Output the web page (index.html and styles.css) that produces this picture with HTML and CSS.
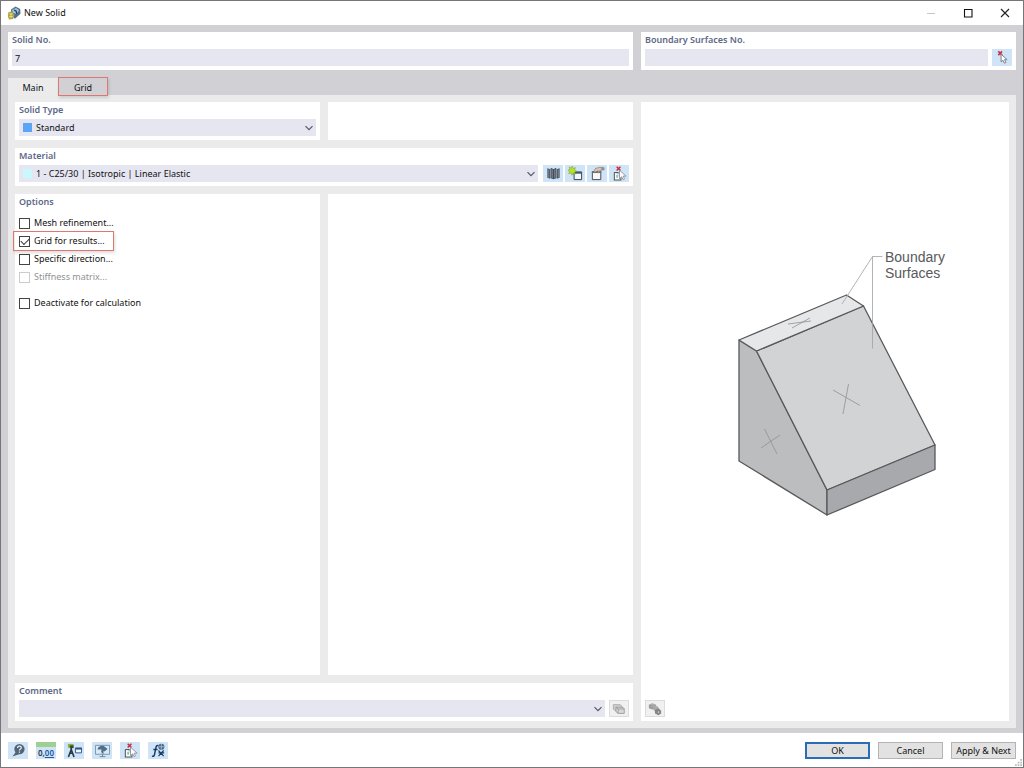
FILE: index.html
```html
<!DOCTYPE html>
<html lang="en">
<head>
<meta charset="utf-8">
<title>New Solid</title>
<link rel="stylesheet" href="styles.css">
</head>
<body>
<svg class="defs" aria-hidden="true">
  <defs>
    <symbol id="chevron" viewBox="0 0 10 10"><path d="M1.5 3.2 5 6.7 8.5 3.2" fill="none" stroke="#555866" stroke-width="1.2"/></symbol>
    <symbol id="select-object" viewBox="0 0 16 16">
      <path d="M2.5 7h4v1M2.5 7v8h7v-3" fill="#f5fbff" stroke="#555" stroke-width="1.1"/>
      <path d="M4.5 9.5h2v3h-2z" fill="#8fc4a8"/>
      <path d="M5 .8 9 4.8M9 .8 5 4.8" stroke="#c92f48" stroke-width="1.7"/>
      <path d="M8 4.5v9l2.2-2 1.6 3 1.5-.8-1.5-2.9H15z" fill="#fff" stroke="#8b8993" stroke-width=".9"/>
    </symbol>
  </defs>
</svg>
<div class="window">
  <header class="titlebar">
    <svg class="app-icon" viewBox="0 0 14 14"><path d="M4 3.500 8.500 .5l4.700 2.500.3 4.800-5.500 5-4-3.500z" fill="#52718f"/><path d="M5 4 9 2l3 2-2 4-4-1z" fill="#a4c3db"/><path d="m7 4 2 1 1 3" fill="none" stroke="#243f62" stroke-width="1.3"/><path d="M1.500 6 5 5.500 7.500 9 6 13 2 13.500 .8 10z" fill="#b5a444"/><path d="M2.500 8h3M2.300 10.500h3.400M4 7v5" stroke="#eee1a0" stroke-width=".8"/></svg>
    <h1 class="title">New Solid</h1>
    <button class="win-btn" aria-label="Minimize" disabled><svg viewBox="0 0 10 10"><path d="M1 5.500h8" stroke="#c6c6c6"/></svg></button>
    <button class="win-btn" aria-label="Maximize"><svg viewBox="0 0 10 10"><path d="M1.500 1.500h7.500v7.500h-7.500z" fill="none" stroke="#111" stroke-width="1.1"/></svg></button>
    <button class="win-btn" aria-label="Close"><svg viewBox="0 0 10 10"><path d="m1 1 8 8M9 1 1 9" stroke="#222" stroke-width="1.1"/></svg></button>
  </header>

  <main class="body">
    <div class="numbers">
      <section class="card">
        <label class="heading" for="solid-no">Solid No.</label>
        <div class="row"><input class="field" id="solid-no" type="text" value="7"></div>
      </section>
      <section class="card">
        <label class="heading" for="surfaces-no">Boundary Surfaces No.</label>
        <div class="row"><input class="field" id="surfaces-no" type="text">
          <button class="tool" aria-label="Select surfaces"><svg viewBox="0 0 16 16"><path d="m3.500 1.500 4 4m0-4-4 4" stroke="#c92f48" stroke-width="1.7"/><path d="M6.500 4.500v8.200l2-1.800 1.500 3.200 1.600-.8-1.400-3h2.700z" fill="#fff" stroke="#7d7b88"/></svg></button>
        </div>
      </section>
    </div>

    <nav class="tabs" role="tablist">
      <button class="tab tab-active" role="tab" aria-selected="true">Main</button>
      <button class="tab marked" role="tab" aria-selected="false">Grid</button>
    </nav>

    <div class="page">
      <div class="settings">
        <section class="card">
          <label class="heading" for="solid-type">Solid Type</label>
          <div class="row">
            <div class="combo">
              <select class="field with-swatch" id="solid-type"><option>Standard</option></select>
              <span class="swatch swatch-type"></span>
              <svg class="arrow"><use href="#chevron"/></svg>
            </div>
          </div>
        </section>
        <section class="card"></section>
        <section class="card wide">
          <label class="heading" for="material">Material</label>
          <div class="row">
            <div class="combo">
              <select class="field with-swatch" id="material"><option>1 - C25/30 | Isotropic | Linear Elastic</option></select>
              <span class="swatch swatch-material"></span>
              <svg class="arrow"><use href="#chevron"/></svg>
            </div>
            <div class="tools">
              <button class="tool" aria-label="Material library"><svg viewBox="0 0 16 16"><path d="M1.500 2.500 4.500 3.500v10l-3-1zM14.500 2.500l-3 1v10l3-1z" fill="#3f4a55"/><path d="M5.300 2.500 8 3.700v10l-2.700-1zM10.700 2.500 8 3.700v10l2.700-1z" fill="#6d7984" stroke="#3f4a55" stroke-width=".8"/><path d="M3 3.500v9M13 3.500v9" stroke="#b9c6d0" stroke-width=".6"/></svg></button>
              <button class="tool" aria-label="New material"><svg viewBox="0 0 16 16"><path d="M6.500 6.500h8v8h-8z" fill="#f2f7fa" stroke="#333b44"/><path d="M6 6h9v2.200H6z" fill="#405970"/><path d="m4.500 0 .9 2.600L8 1.700 7 4.200l2.500 1.300L7 6.300l.7 2.500L5.200 7.500 4.300 10l-.9-2.600-2.600.8 1-2.500L-.5 4.400l2.500-.8L1.300 1l2.400 1.300z" fill="#b9e02c" stroke="#719d19" stroke-width=".5"/></svg></button>
              <button class="tool" aria-label="Edit material"><svg viewBox="0 0 16 16"><path d="M2.500 6h9v8.500h-9z" fill="#f8f8f8" stroke="#40464e"/><path d="M2 5.500h10v2H2z" fill="#646e79"/><path d="m4 6 2-3.500L10 1.500h4v2.700l-3 .3-2 3-1-.4 1-2-4 1.500z" fill="#e1c0b5" stroke="#76645f" stroke-width=".6"/><path d="M12 1.500h3.500v3H12z" fill="#8793a0"/></svg></button>
              <button class="tool" aria-label="Select material"><svg><use href="#select-object"/></svg></button>
            </div>
          </div>
        </section>
        <section class="card options" role="group" aria-labelledby="options-title">
          <h2 class="heading" id="options-title">Options</h2>
          <label class="option"><input type="checkbox">Mesh refinement...</label>
          <label class="option marked"><input type="checkbox" checked>Grid for results...</label>
          <label class="option"><input type="checkbox">Specific direction...</label>
          <label class="option"><input type="checkbox" disabled>Stiffness matrix...</label>
          <label class="option option-apart"><input type="checkbox">Deactivate for calculation</label>
        </section>
        <section class="card"></section>
        <section class="card wide">
          <label class="heading" for="comment">Comment</label>
          <div class="row">
            <div class="combo">
              <select class="field" id="comment"><option></option></select>
              <svg class="arrow"><use href="#chevron"/></svg>
            </div>
            <button class="tool tool-off" aria-label="Comment library" disabled><svg viewBox="0 0 16 16"><path d="M1.500 3h8l2 2v5h-8l-2-2z" fill="#ccc" stroke="#aaa"/><path d="M4.500 6h7l2.500 1.500V13H7l-2.500-2z" fill="#d8d8d8" stroke="#999"/><path d="M4.500 6 7 8h7M7 8v5" fill="none" stroke="#999"/></svg></button>
          </div>
        </section>
      </div>

      <section class="card preview">
        <svg class="drawing" viewBox="0 0 250 290" role="img" aria-label="Solid with boundary surfaces">
          <g stroke="#58595b" stroke-width="1.3" stroke-linejoin="round">
            <path d="M19 105 36.500 116 107 255v25L19 226z" fill="#bcbdbf"/>
            <path d="m36.500 116 107-45L215 210 107 255z" fill="#d2d3d5"/>
            <path d="m19 105 107.500-45L143.500 71l-107 45z" fill="#e6e7e8"/>
            <path d="m107 255 108-45v24.500L107 280z" fill="#a8a9ad"/>
          </g>
          <path d="m68 89 23-3M72 93l18-10M113 155l27 15.500M128.500 149l-5.500 30M41 213l19-13M44.500 194 57 219" fill="none" stroke="#8f9093" stroke-width=".8"/>
          <path d="M162.500 21.500h-10L122 69M152.500 21.500v92" fill="none" stroke="#a0a1a4" stroke-width=".8"/>
          <text class="caption" x="165" y="27">Boundary</text>
          <text class="caption" x="165" y="43">Surfaces</text>
        </svg>
        <button class="tool tool-off" aria-label="Preview settings" disabled><svg viewBox="0 0 16 16"><path d="M1 3 5 1.500 9 3v4L5 8.500 1 7z" fill="#999"/><path d="M1 3h8M3 5h6" stroke="#bbb" stroke-width=".8"/><path d="m5 7 4-3 3 2v4l-4 1z" fill="#aaa"/><path d="m8 9 4-2 3 3v3l-3 2-4-2z" fill="#858585"/><circle cx="12" cy="11.500" r="1" fill="#ccc"/></svg></button>
      </section>
    </div>
  </main>

  <footer class="footer">
    <div class="footer-tools">
      <button class="tool" aria-label="Help"><svg viewBox="0 0 16 16"><circle cx="9" cy="6.500" r="5.500" fill="#526577"/><path d="M5.500 9 1.500 14.500l7-2.500z" fill="#526577"/><path d="M7 5.300C7 2.500 11 2.800 11 5c0 1.500-2 1.500-2 3m0 1v1.300" fill="none" stroke="#e6eff5" stroke-width="1.300"/></svg></button>
      <button class="tool tool-units" aria-label="Units">0,<u>00</u></button>
      <button class="tool" aria-label="Display properties"><svg viewBox="0 0 16 16"><path d="M1 1h6v4H1z" fill="#8fae43"/><path d="M3 2.500h4v3H3z" fill="#384b34"/><path d="M4.500 5v4M1.500 15l3-8 3 8M2.500 11h4" fill="none" stroke="#263943" stroke-width="1.700"/><path d="M9 5.500h6.500v5H9z" fill="#eff7fd" stroke="#31548a"/><path d="M9 5h7v2H9z" fill="#31548a"/></svg></button>
      <button class="tool" aria-label="View"><svg viewBox="0 0 16 16"><path d="M.5 2.500h15v9.500H.5z" fill="#d8eaf5" stroke="#7893aa"/><path d="M8 12v2.500m-3 0h6" stroke="#67839c"/><path d="M2.500 7C3.500 3.500 6 2.500 9 3l4.500 3.500L10 9 9 8.500V12L6.500 9.500 7 7z" fill="#526e86"/></svg></button>
      <button class="tool" aria-label="Select object"><svg><use href="#select-object"/></svg></button>
      <button class="tool" aria-label="Formula"><svg viewBox="0 0 16 16"><path d="M8 3C6 2 5.500 3.500 5 6l-1.200 6c-.4 2-1.300 2.500-2.800 2M2.500 7H7" fill="none" stroke="#173d61" stroke-width="1.500"/><circle cx="11" cy="4" r="3.300" fill="#49698e"/><path d="M8 4h6M11 1v6" stroke="#b9d5e8" stroke-width=".7"/><path d="m8 8 5.500 6M13.500 8 8 14M8 10.500h6" stroke="#173d61" stroke-width="1.200"/></svg></button>
    </div>
    <div class="actions">
      <button class="action action-default">OK</button>
      <button class="action">Cancel</button>
      <button class="action">Apply &amp; Next</button>
    </div>
    <svg class="grip" viewBox="0 0 8 8"><path d="M6 0h2v2H6zM3 3h2v2H3zM6 3h2v2H6zM0 6h2v2H0zM3 6h2v2H3zM6 6h2v2H6z" fill="#bdbdbd"/></svg>
  </footer>
</div>
</body>
</html>
```
FILE: styles.css
```css
* { box-sizing: border-box; }
body, h1, h2 { margin: 0; }
body {
  background: #77757a;
  font: 9px/16px "Noto Sans", "Open Sans", sans-serif;
  color: #111;
}
button, input, select { margin: 0; font: inherit; color: inherit; }
button { padding: 0; border: 0; border-radius: 0; background: none; }
.defs { position: absolute; width: 0; height: 0; }

.window {
  min-height: 100vh;
  display: flex;
  flex-direction: column;
  border: 1px solid #77757a;
  background: #fff;
}
.titlebar { display: flex; align-items: center; height: 24px; padding-left: 6px; }
.app-icon { width: 14px; height: 14px; }
.title { flex: 1; margin-left: 3px; font-size: 9px; font-weight: 400; }
.win-btn { width: 37px; height: 24px; display: grid; place-items: center; }
.win-btn svg { width: 10px; height: 10px; }

.body {
  flex: 1;
  display: flex;
  flex-direction: column;
  padding: 7px 7px 5px;
  background: #d0d0d5;
}
.numbers { display: grid; grid-template-columns: 625fr 375fr; gap: 8px; }
.card { min-width: 0; min-height: 38px; padding: 0 4px 4px; background: #fff; }
.heading { display: block; height: 17px; color: #5d6888; font-size: 9px; font-weight: 600; }
.row { display: flex; gap: 4px; }
.field {
  flex: 1;
  width: 100%;
  min-width: 0;
  height: 17px;
  padding: 1px 3px 0;
  border: 0;
  border-radius: 0;
  appearance: none;
  background: #e6e6f1;
}
.combo { position: relative; flex: 1; display: flex; }
.with-swatch { padding-left: 17px; }
.swatch { position: absolute; left: 4px; top: 4px; width: 9px; height: 9px; pointer-events: none; }
.swatch-type { background: #5ca5f6; }
.swatch-material { background: #c9f8fd; }
.arrow { position: absolute; right: 2px; top: 4px; width: 10px; height: 10px; pointer-events: none; }

.tools { display: flex; gap: 2px; margin-left: 1px; }
.tool { flex: none; width: 20px; height: 17px; display: grid; place-items: center; background: #cfe4f6; }
.tool svg { width: 15px; height: 15px; }
.tool-off { border: 1px solid #dcdcdc; background: #f0f0f0; }
.tool-off svg { width: 14px; height: 14px; }
.tool-units {
  display: block;
  padding-top: 4px;
  background: linear-gradient(#9fd091 5px, #cfe4f6 5px);
  font-size: 8px;
  font-weight: 600;
  line-height: 13px;
  color: #22364c;
}
.tool-units u { color: #2455a0; }

.tabs { display: flex; margin-top: 8px; }
.tab { width: 50px; height: 17px; padding-top: 2px; }
.tab-active { background: #ebebec; }
.marked { position: relative; }
.marked::after {
  content: "";
  position: absolute;
  inset: -1px 0;
  border: 1px solid #dd7770;
  box-shadow: 1px 2px 3px #0002;
  pointer-events: none;
}

.page {
  flex: 1;
  display: grid;
  grid-template-columns: 618fr 368fr;
  gap: 8px;
  padding: 7px;
  background: #ebebec;
}
.settings {
  display: grid;
  grid-template-columns: 1fr 1fr;
  grid-template-rows: auto auto 1fr auto;
  gap: 8px;
}
.wide { grid-column: 1 / -1; }
.options .heading { margin-bottom: 3px; }
.option { display: flex; align-items: center; gap: 4px; width: max-content; height: 18px; }
.option-apart { margin-top: 8px; }
.option:has(:disabled) { color: #929292; }
.option input {
  display: grid;
  place-items: center;
  width: 11px;
  height: 11px;
  border: 1px solid #444;
  appearance: none;
  background: #fff;
}
.option input:checked::before {
  content: "";
  width: 7px;
  height: 4px;
  margin-bottom: 2px;
  border: solid #333;
  border-width: 0 0 1px 1px;
  transform: rotate(-45deg);
}
.option input:disabled { border-color: #ccc; }
.option.marked::after { inset: -1px -9px -1px -6px; }

.preview { display: flex; flex-direction: column; justify-content: space-between; }
.drawing { align-self: center; width: 70%; max-width: 250px; margin: 133px 0 0 40px; }
.caption { font: 14px "Liberation Sans", Arial, sans-serif; fill: #58595b; }

.footer { position: relative; display: flex; justify-content: space-between; align-items: center; height: 34px; padding: 0 7px; }
.footer-tools, .actions { display: flex; gap: 8px; }
.action { width: 65px; height: 17px; border: 1px solid #b4b4b4; background: #e2e2e2; }
.action-default { border: 2px solid #2a6db5; line-height: 13px; }
.grip { position: absolute; right: 1px; bottom: 1px; width: 7px; height: 7px; }
```
